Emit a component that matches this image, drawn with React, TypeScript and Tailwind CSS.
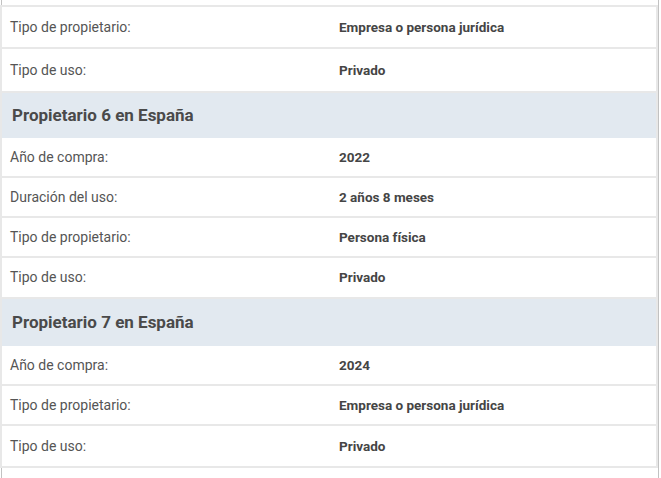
import React from 'react';

type Row = { label: string; value: string; h: string };
type Section = { title?: string; th?: string; rows: Row[] };

const sections: Section[] = [
  {
    rows: [
      { label: 'Tipo de propietario:', value: 'Empresa o persona jurídica', h: 'h-[42px]' },
      { label: 'Tipo de uso:', value: 'Privado', h: 'h-[44px]' },
    ],
  },
  {
    title: 'Propietario 6 en España',
    th: 'h-[45px]',
    rows: [
      { label: 'Año de compra:', value: '2022', h: 'h-[40px]' },
      { label: 'Duración del uso:', value: '2 años 8 meses', h: 'h-[40px]' },
      { label: 'Tipo de propietario:', value: 'Persona física', h: 'h-[40px]' },
      { label: 'Tipo de uso:', value: 'Privado', h: 'h-[41px]' },
    ],
  },
  {
    title: 'Propietario 7 en España',
    th: 'h-[47px]',
    rows: [
      { label: 'Año de compra:', value: '2024', h: 'h-[40px]' },
      { label: 'Tipo de propietario:', value: 'Empresa o persona jurídica', h: 'h-[40px]' },
      { label: 'Tipo de uso:', value: 'Privado', h: 'h-[42px]' },
    ],
  },
];

const App = () => {
  return (
    <div className="w-[661px] h-[478px] bg-white font-['Roboto',sans-serif] overflow-hidden">
      <div className="ml-px w-[658px] h-full border-x border-[#c2c2c2] pt-[5px]">
        <div className="-ml-[2px] w-[658px] border-x-2 border-t-2 border-[#e8e8e8]">
          {sections.map((s, i) => (
            <div key={i}>
              {s.title && (
                <div className={`${s.th} flex items-center px-[10px] bg-[#e2e9f0] text-[17px] font-bold text-[#4a4a4a]`}>
                  {s.title}
                </div>
              )}
              {s.rows.map((r, j) => (
                <div key={j} className={`${r.h} grid grid-cols-2 items-center border-b-2 border-[#e8e8e8] bg-white`}>
                  <div className="pl-2 text-[14px] text-[#555]">{r.label}</div>
                  <div className="pl-[10px] text-[13.5px] font-bold text-[#454545]">{r.value}</div>
                </div>
              ))}
            </div>
          ))}
        </div>
      </div>
    </div>
  );
};

export default App;
